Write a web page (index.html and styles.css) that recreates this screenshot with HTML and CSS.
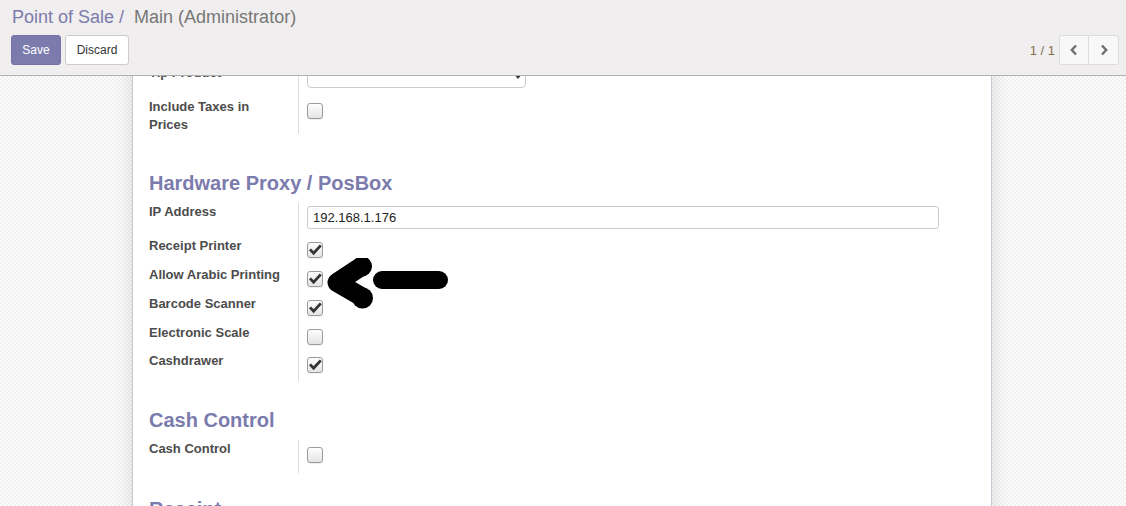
FILE: index.html
```html
<!DOCTYPE html>
<html>
<head>
<meta charset="utf-8">
<link rel="stylesheet" href="styles.css">
</head>
<body>
<div class="cp">
  <ol class="crumbs">
    <li class="crumb-link">Point of Sale</li>
    <li class="crumb-sep">/</li>
    <li class="crumb-active">Main (Administrator)</li>
  </ol>
  <div class="cp-bottom">
    <div class="cp-buttons">
      <button class="btn btn-primary">Save</button>
      <button class="btn btn-default">Discard</button>
    </div>
    <div class="pager">
      <span class="pager-value">1 / 1</span>
      <div class="pager-btns">
        <button class="pbtn"><svg width="10" height="12" viewBox="0 0 10 12"><polyline points="7,1.5 2.8,6 7,10.5" fill="none" stroke="#6e6e6e" stroke-width="2.4"/></svg></button>
        <button class="pbtn"><svg width="10" height="12" viewBox="0 0 10 12"><polyline points="3,1.5 7.2,6 3,10.5" fill="none" stroke="#6e6e6e" stroke-width="2.4"/></svg></button>
      </div>
    </div>
  </div>
</div>
<div class="content">
  <div class="sheet">
    <h2 class="sep">Pricing</h2>
    <div class="group g-pricing">
      <div class="row r-input">
        <div class="lbl">Pricelist</div>
        <div class="field"><div class="select">Public Pricelist<span class="caret"></span></div></div>
      </div>
      <div class="row r-select" id="tip">
        <div class="lbl">Tip Product</div>
        <div class="field"><div class="select"><span class="caret"></span></div></div>
      </div>
      <div class="row r-tall">
        <div class="lbl">Include Taxes in Prices</div>
        <div class="field"><span class="cb"></span></div>
      </div>
    </div>

    <h2 class="sep">Hardware Proxy / PosBox</h2>
    <div class="group g-hw">
      <div class="row r-ip">
        <div class="lbl">IP Address</div>
        <div class="field"><div class="input">192.168.1.176</div></div>
      </div>
      <div class="row r-cb">
        <div class="lbl">Receipt Printer</div>
        <div class="field"><span class="cb"><svg viewBox="0 0 16 16"><polyline points="3,7.4 6.6,11.2 13.8,3.4" fill="none" stroke="#333" stroke-width="2.8"/></svg></span></div>
      </div>
      <div class="row r-cb r-arrow">
        <div class="lbl">Allow Arabic Printing</div>
        <div class="field"><span class="cb"><svg viewBox="0 0 16 16"><polyline points="3,7.4 6.6,11.2 13.8,3.4" fill="none" stroke="#333" stroke-width="2.8"/></svg></span></div>
        <svg class="arrow" width="140" height="56" viewBox="0 0 140 56">
          <polyline points="43,8 18,24.5 43,39" fill="none" stroke="#000" stroke-width="19" stroke-linecap="round" stroke-linejoin="round"/>
          <circle cx="43" cy="8.5" r="10" fill="#000"/>
          <circle cx="43.5" cy="40" r="10.5" fill="#000"/>
          <line x1="63" y1="22" x2="120" y2="22" stroke="#000" stroke-width="18" stroke-linecap="round"/>
        </svg>
      </div>
      <div class="row r-cb">
        <div class="lbl">Barcode Scanner</div>
        <div class="field"><span class="cb"><svg viewBox="0 0 16 16"><polyline points="3,7.4 6.6,11.2 13.8,3.4" fill="none" stroke="#333" stroke-width="2.8"/></svg></span></div>
      </div>
      <div class="row r-cb r-short">
        <div class="lbl">Electronic Scale</div>
        <div class="field"><span class="cb"></span></div>
      </div>
      <div class="row r-cb">
        <div class="lbl">Cashdrawer</div>
        <div class="field"><span class="cb"><svg viewBox="0 0 16 16"><polyline points="3,7.4 6.6,11.2 13.8,3.4" fill="none" stroke="#333" stroke-width="2.8"/></svg></span></div>
      </div>
    </div>

    <h2 class="sep">Cash Control</h2>
    <div class="group g-cash">
      <div class="row r-cash">
        <div class="lbl">Cash Control</div>
        <div class="field"><span class="cb cb-low"></span></div>
      </div>
    </div>

    <h2 class="sep">Receipt</h2>
    <div class="group">
      <div class="row r-cb">
        <div class="lbl">Receipt Header</div>
        <div class="field"><span class="cb"></span></div>
      </div>
      <div class="row r-cb">
        <div class="lbl">Receipt Footer</div>
        <div class="field"><span class="cb"></span></div>
      </div>
    </div>
  </div>
</div>
<script src="script.js"></script>
</body>
</html>
```

FILE: styles.css
```css
html, body {
  margin: 0;
  padding: 0;
  height: 100%;
}
body {
  font-family: "Liberation Sans", Arial, sans-serif;
  font-size: 13px;
  color: #4c4c4c;
  display: flex;
  flex-direction: column;
  overflow: hidden;
  background: #fff;
}

/* ---------- control panel ---------- */
.cp {
  flex: none;
  height: 76px;
  box-sizing: border-box;
  padding: 5px 7px 0 11px;
  background: #f0eeee;
  border-bottom: 1px solid #b2afb2;
}
.crumbs {
  list-style: none;
  margin: 0 0 0 1px;
  padding: 0;
  display: flex;
  font-size: 18px;
  line-height: 24px;
  height: 24px;
}
.crumb-link { color: #7c7bad; }
.crumb-sep { color: #7c7bad; margin-left: 5px; margin-right: 10px; }
.crumb-active { color: #777; }

.cp-bottom {
  margin-top: 6px;
  display: flex;
  justify-content: space-between;
  align-items: center;
  height: 30px;
}
.cp-buttons { display: flex; gap: 4px; }
.btn {
  font-family: "Liberation Sans", Arial, sans-serif;
  font-size: 12px;
  height: 30px;
  border-radius: 3px;
  border: 1px solid #ccc;
  cursor: pointer;
  line-height: 28px;
  padding: 0;
}
.btn-primary {
  background: #7c7bad;
  border-color: #7473a6;
  color: #fff;
  width: 50px;
}
.btn-default {
  background: #fff;
  color: #333;
  width: 64px;
}
.pager { display: flex; align-items: center; gap: 4px; }
.pager-value { color: #86704f; font-size: 13px; }
.pager-btns { display: flex; }
.pbtn {
  width: 30px;
  height: 30px;
  background: #f8f8f8;
  border: 1px solid #dcdcdc;
  padding: 0;
  display: flex;
  align-items: center;
  justify-content: center;
}
.pbtn:first-child { border-radius: 3px 0 0 3px; }
.pbtn:last-child { border-radius: 0 3px 3px 0; border-left: none; }

/* ---------- content ---------- */
.content {
  flex: 1;
  overflow: hidden;
  display: flex;
  justify-content: center;
  align-items: flex-start;
  padding-right: 2px;
  background-color: #fbfbfb;
  background-image: conic-gradient(#f1f1f1 25%, #fcfcfc 0 50%, #f1f1f1 0 75%, #fcfcfc 0);
  background-size: 4px 4px;
}
.sheet {
  flex: none;
  width: 860px;
  box-sizing: border-box;
  margin: 12px 0 40px;
  padding: 16px 16px 40px 16px;
  background: #fff;
  border: 1px solid #c8c8d3;
  box-shadow: 0 0 18px rgba(0, 0, 0, 0.13);
  display: flex;
  flex-direction: column;
}
.sep {
  margin: 25px 0 8.5px;
  font-size: 20px;
  line-height: 22px;
  font-weight: bold;
  color: #7c7bad;
}
.sep:first-child { margin-top: 0; }

.group { display: flex; flex-direction: column; }
.g-pricing { margin-bottom: 13.5px; }
.g-hw { margin-bottom: 3.75px; }

.row { display: flex; position: relative; }
.lbl {
  flex: none;
  width: 150px;
  box-sizing: border-box;
  padding-right: 10px;
  border-right: 1px solid #dcdcdc;
  font-weight: bold;
  line-height: 18px;
  color: #4c4c4c;
}
.field { padding-left: 8px; flex: 1; }

.r-input { height: 36px; }
.r-select { height: 34px; }
.r-select .select { margin-top: 1px; }
.r-tall { height: 36px; }
.r-ip { height: 34px; }
.r-cb { height: 29px; }
.r-short { height: 28px; }
.r-cash { height: 33px; }

.select {
  margin-top: 3px;
  width: 219px;
  height: 23px;
  box-sizing: border-box;
  border: 1px solid #ccc;
  border-radius: 4px;
  position: relative;
  padding-left: 5px;
  line-height: 21px;
  color: #333;
}
.caret {
  position: absolute;
  right: 3px;
  top: 8px;
  width: 0;
  height: 0;
  border-left: 4.5px solid transparent;
  border-right: 4.5px solid transparent;
  border-top: 5px solid #333;
}
.input {
  margin-top: 3px;
  width: 632px;
  height: 23px;
  box-sizing: border-box;
  border: 1px solid #ccc;
  border-radius: 3px;
  padding-left: 5px;
  line-height: 21px;
  color: #222;
  font-size: 13px;
}
.cb {
  display: block;
  margin-top: 5px;
  width: 16px;
  height: 16px;
  box-sizing: border-box;
  border: 1px solid #9b9b9b;
  border-radius: 3px;
  background: linear-gradient(#fdfdfd, #e4e4e4);
  box-shadow: 0 1px 0 rgba(0,0,0,0.06);
  position: relative;
}
.cb-low { margin-top: 7px; }
.cb svg {
  position: absolute;
  left: -1px;
  top: -1px;
  width: 16px;
  height: 16px;
}
.arrow {
  position: absolute;
  left: 170px;
  top: -8px;
}
```

FILE: script.js
```js
var c = document.querySelector('.content');
var t = document.getElementById('tip');
c.scrollTop = Math.round(t.getBoundingClientRect().top - 64);
```
